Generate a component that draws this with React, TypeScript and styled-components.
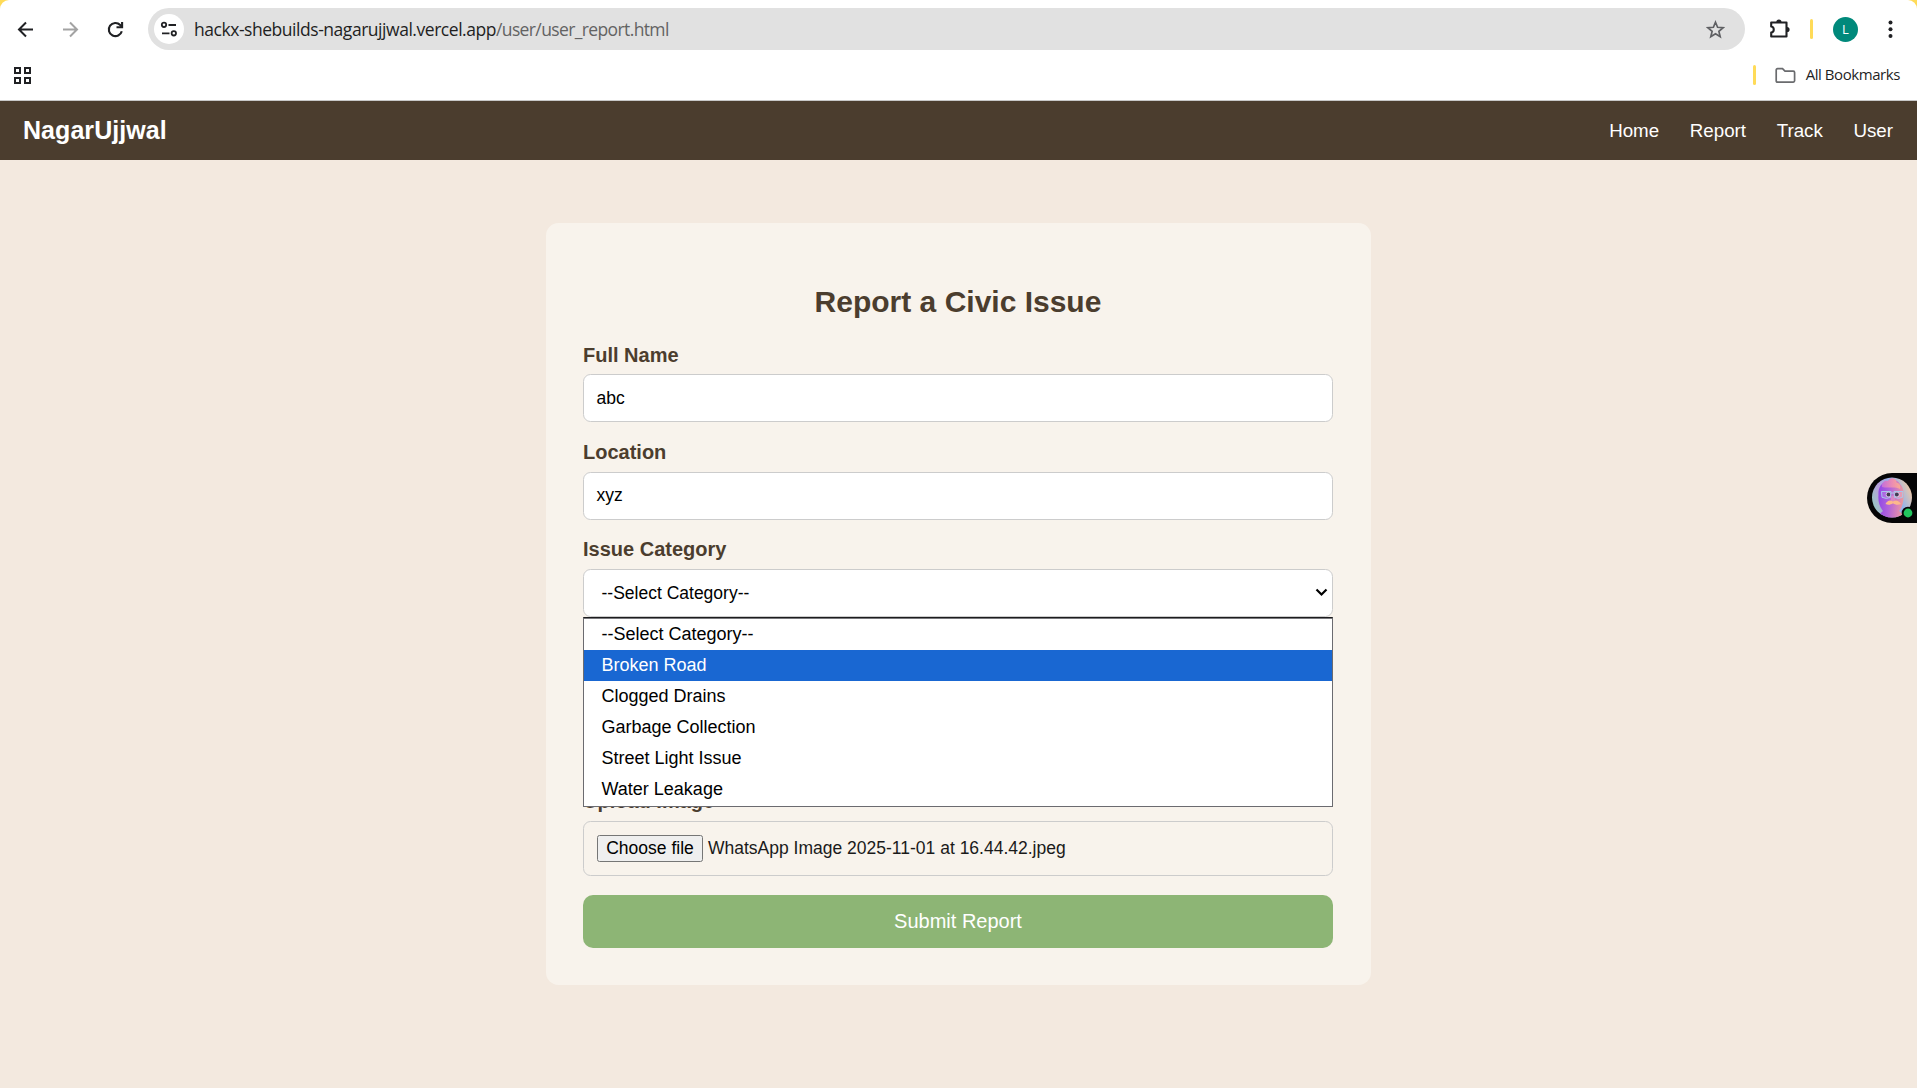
import React from "react";
import styled, { createGlobalStyle } from "styled-components";

const arial = `"Liberation Sans", Arial, sans-serif`;
const segoe = `"Open Sans", "Noto Sans", sans-serif`;

const GlobalStyle = createGlobalStyle`
  *, *::before, *::after { box-sizing: border-box; }
  body { margin: 0; background: #f3e9df; font-family: ${arial}; }
`;

const Screen = styled.div`
  position: relative;
  display: flex;
  flex-direction: column;
  width: 1917px;
  height: 1088px;
  overflow: hidden;
  background: #f3e9df;
`;

/* ---------- browser chrome ---------- */

const ChromeFrame = styled.header`
  flex: none;
  background: #ffdb58;
`;

const ChromeSurface = styled.div`
  height: 101px;
  background: #fff;
  border-bottom: 1px solid #c8c8c8;
  border-radius: 9px 9px 0 0;
`;

const ToolbarRow = styled.div`
  display: flex;
  align-items: center;
  height: 54px;
  padding: 4px 17px 0 14px;
`;

const BookmarksRow = styled.div`
  display: flex;
  align-items: center;
  justify-content: space-between;
  height: 46px;
  padding: 0 17px 4px 13px;
`;

const NavIcons = styled.div`
  display: flex;
  align-items: center;
  gap: 22px;
  margin-right: 21px;
`;

const Icon = styled.svg`
  display: block;
  flex: none;
`;

const AddressBar = styled.div`
  display: flex;
  align-items: center;
  width: 1597px;
  height: 42px;
  padding: 0 20px 0 6px;
  border-radius: 21px;
  background: #e1e1e1;
`;

const SiteInfo = styled.div`
  display: grid;
  place-items: center;
  width: 30px;
  height: 30px;
  border-radius: 50%;
  background: #fff;
`;

const Url = styled.div`
  flex: 1;
  margin-left: 10px;
  font: 400 17.5px/24px ${segoe};
  letter-spacing: -0.46px;
  color: #1f1f1f;
  white-space: nowrap;
`;

const UrlPath = styled.span`
  letter-spacing: -0.62px;
  color: #636363;
`;

const ToolbarActions = styled.div`
  display: flex;
  align-items: center;
  margin-left: 24px;
`;

const Divider = styled.span<{ $left: number; $right: number }>`
  width: 3px;
  height: 20px;
  margin: 0 ${(p) => p.$right}px 0 ${(p) => p.$left}px;
  border-radius: 2px;
  background: #ffdb58;
`;

const Profile = styled.span`
  display: grid;
  place-items: center;
  width: 25px;
  height: 25px;
  margin-right: 29px;
  border-radius: 50%;
  background: #00897b;
  color: #fff;
  font: 400 13px/25px ${segoe};
`;

const AllBookmarks = styled.div`
  display: flex;
  align-items: center;
  font: 400 15px/20px ${segoe};
  letter-spacing: -0.43px;
  color: #1f1f1f;
  white-space: nowrap;
`;

const BookmarksLabel = styled.span`
  margin-left: 10px;
  padding-bottom: 2px;
`;

/* ---------- site ---------- */

const SiteHeader = styled.nav`
  display: flex;
  align-items: center;
  justify-content: space-between;
  flex: none;
  height: 59px;
  padding: 0 24px 0 23px;
  background: #4b3d2e;
  color: #fff;
`;

const Brand = styled.div`
  font: 700 25px/29px ${arial};
  letter-spacing: 0.06px;
`;

const SiteLinks = styled.div`
  display: flex;
  gap: 30.6px;
`;

const SiteLink = styled.a`
  font: 400 18.75px/22px ${arial};
  color: #fff;
`;

const Main = styled.main`
  display: flex;
  justify-content: center;
  padding-top: 63px;
`;

const Card = styled.form`
  width: 825px;
  height: 762px;
  padding: 62px 38px 37px 37px;
  border-radius: 12.5px;
  background: #f8f3ec;
`;

const Title = styled.h2`
  margin: 0 0 24.65px;
  font: 700 30px/33px ${arial};
  color: #4b3d2e;
  text-align: center;
`;

const Field = styled.div`
  position: relative;
  margin-bottom: 17.55px;
`;

const Label = styled.label`
  display: block;
  margin-bottom: 7.7px;
  font: 700 20px/24px ${arial};
  color: #4b3d2e;
`;

const Control = styled.div<{ $inset?: number }>`
  display: flex;
  align-items: center;
  justify-content: space-between;
  height: 48px;
  padding: 0 4px 0.3px ${(p) => p.$inset ?? 12.5}px;
  border: 1px solid #ccc;
  border-radius: 7.5px;
  background: #fff;
  font: 400 17.5px/20px ${arial};
  color: #000;
`;

const TextArea = styled.textarea`
  display: block;
  width: 100%;
  height: 137.6px;
  border: 1px solid #ccc;
  border-radius: 7.5px;
  resize: none;
`;

const Menu = styled.ul`
  position: absolute;
  z-index: 2;
  top: 100%;
  left: 0;
  right: 0;
  height: 190px;
  margin: 0;
  padding: 1px 0 0;
  list-style: none;
  background: #fff;
  border: 1px solid #6b6b70;
  border-top-color: #1c1c1e;
  box-shadow: inset 0 1px 0 #77777b;
`;

const Option = styled.li<{ $active?: boolean }>`
  height: 31px;
  padding-left: 17.5px;
  font: 400 18px/31px ${arial};
  color: ${(p) => (p.$active ? "#fff" : "#000")};
  background: ${(p) => (p.$active ? "#1967d2" : "transparent")};
`;

const FileControl = styled.div`
  display: flex;
  align-items: center;
  height: 55px;
  padding: 0 0 1px 13px;
  border: 1px solid #ccc;
  border-radius: 7.5px;
  font: 400 17.5px/20px ${arial};
  color: #1a1a1a;
`;

const FileButton = styled.span`
  width: 106px;
  height: 27px;
  margin-right: 5px;
  border: 1px solid #767676;
  border-radius: 2.5px;
  background: #efefef;
  line-height: 25px;
  text-align: center;
  color: #000;
`;

const Submit = styled.button`
  display: block;
  width: 100%;
  height: 53px;
  margin-top: 18.75px;
  padding: 0;
  border: 0;
  border-radius: 10px;
  background: #8db575;
  color: #fff;
  font: 400 20px/23px ${arial};
`;

const Assistant = styled.div`
  position: absolute;
  top: 473px;
  right: 0;
  display: flex;
  align-items: center;
  width: 50px;
  height: 50px;
  padding-left: 5px;
  border-radius: 25px 0 0 25px;
  background: #050506;
`;

const OPTIONS = [
  "--Select Category--",
  "Broken Road",
  "Clogged Drains",
  "Garbage Collection",
  "Street Light Issue",
  "Water Leakage",
];

function AssistantFace() {
  return (
    <Icon width="45" height="50" viewBox="0 0 45 50">
      <defs>
        <linearGradient id="sky" x1="0" y1="0.75" x2="1" y2="0.3">
          <stop offset="0" stopColor="#8fd0bd" />
          <stop offset="0.3" stopColor="#b9a0dd" />
          <stop offset="0.6" stopColor="#94b4ea" />
          <stop offset="0.9" stopColor="#f3c9a4" />
        </linearGradient>
        <linearGradient id="skin" x1="0" y1="0.5" x2="1" y2="0.6">
          <stop offset="0" stopColor="#8f45e6" />
          <stop offset="0.4" stopColor="#b063dc" />
          <stop offset="0.75" stopColor="#dd86b4" />
          <stop offset="1" stopColor="#f6ac86" />
        </linearGradient>
        <linearGradient id="hair" x1="0" y1="0" x2="1" y2="0">
          <stop offset="0" stopColor="#c56fd8" />
          <stop offset="0.6" stopColor="#ee8fb0" />
          <stop offset="1" stopColor="#f8ab92" />
        </linearGradient>
        <clipPath id="disc">
          <circle cx="20" cy="24.5" r="20" />
        </clipPath>
      </defs>
      <g clipPath="url(#disc)">
        <rect width="45" height="50" fill="url(#sky)" />
        <path d="M5 47c1-5 4-7 6-9-4-5-5-10-4.500-16C6 15 9 10 14 9c4-3 12-3 14 2 3 3 4 7 3.500 12 0 7-1.500 12-4.500 15 2 2 6 4 7 9z" fill="url(#skin)" />
        <path d="M10 14c-1-4 3-7 6-6 3-5 9-2 8.500 1.500 3.500 1 4.500 4 3.500 6.500-5-3-12-.5-18-2z" fill="url(#hair)" />
        <ellipse cx="21" cy="25.500" rx="2.200" ry="3" fill="#d987c4" />
        <path d="M13.500 31c1.500-3.500 5-4.500 7.500-2.500 2.500-2 6-1 8 2.500-3 1-5.500 1-8-.8-2.500 1.800-5 1.800-7.500.8z" fill="#fdb98c" />
        <circle cx="16.300" cy="21.500" r="2.500" fill="#ded0ee" />
        <circle cx="25" cy="21.500" r="2.500" fill="#ded0ee" />
        <circle cx="16.500" cy="21.500" r="2" fill="#29203c" />
        <circle cx="24.800" cy="21.500" r="2" fill="#29203c" />
        <path
          d="M9.500 18.500h9.500l-.4 5.800q-4.300 2.200-8.600 0zM22 18.500h9l-.5 5.800q-4 2.200-8 0zM19 20h3"
          fill="#fff"
          fillOpacity="0.120"
          stroke="#a9c6ea"
          strokeWidth="1"
        />
      </g>
      <circle cx="36" cy="40" r="6.300" fill="#050506" />
      <circle cx="36" cy="40" r="4.400" fill="#22c55e" />
    </Icon>
  );
}

function BrowserChrome() {
  return (
    <ChromeFrame>
      <ChromeSurface>
        <ToolbarRow>
          <NavIcons>
            <Icon width="23" height="23" viewBox="0 0 23 23" fill="none" stroke="#202124" strokeWidth="2">
              <path d="M19 11.500H5.500M12 4.500l-7 7 7 7" />
            </Icon>
            <Icon width="23" height="23" viewBox="0 0 23 23" fill="none" stroke="#a3a3a3" strokeWidth="2">
              <path d="M4 11.500h13.500M11 4.500l7 7-7 7" />
            </Icon>
            <Icon width="23" height="23" viewBox="0 0 23 23" fill="none" stroke="#202124" strokeWidth="2.100">
              <path d="M17.800 13.200A6.600 6.600 0 1 1 16.200 7L18 9" />
              <path d="M18.100 4v5.300H12.500" />
            </Icon>
          </NavIcons>
          <AddressBar>
            <SiteInfo>
              <Icon width="18" height="18" viewBox="0 0 18 18" fill="none" stroke="#202124" strokeWidth="1.800">
                <circle cx="4" cy="4.800" r="2.200" />
                <path d="M8.500 5H16M2 13.300H9.500" />
                <circle cx="13.800" cy="13.300" r="2.200" />
              </Icon>
            </SiteInfo>
            <Url>
              hackx-shebuilds-nagarujjwal.vercel.app<UrlPath>/user/user_report.html</UrlPath>
            </Url>
            <Icon width="19" height="19" viewBox="0 0 19 19" fill="none" stroke="#5f6063" strokeWidth="1.700">
              <path d="M9.500 2.200l2.100 5.100 5.500.45-4.200 3.600 1.300 5.400-4.700-2.900-4.700 2.900 1.300-5.400L1.900 7.750l5.500-.45z" />
            </Icon>
          </AddressBar>
          <ToolbarActions>
            <Icon width="22" height="22" viewBox="0 0 22 22">
              <path
                d="M3.200 4.500H17.500V18.500H2.200V14.600C5.600 14.200 5.600 8.900 2.200 8.500V4.500z"
                fill="none"
                stroke="#202124"
                strokeWidth="2.100"
                strokeLinejoin="round"
              />
              <path d="M7.300 4a2.600 2.600 0 0 1 5.200 0zM18 8.900a2.600 2.600 0 0 1 0 5.200z" fill="#202124" />
            </Icon>
            <Divider $left={19} $right={20} />
            <Profile>L</Profile>
            <Icon width="7" height="19" viewBox="0 0 7 19" fill="#202124">
              <circle cx="3.500" cy="2.500" r="2" />
              <circle cx="3.500" cy="9.200" r="2" />
              <circle cx="3.500" cy="16" r="2" />
            </Icon>
          </ToolbarActions>
        </ToolbarRow>
        <BookmarksRow>
          <Icon width="19" height="19" viewBox="0 0 19 19" fill="none" stroke="#202124" strokeWidth="2">
            <path d="M2 2h5v5H2zM12 2h5v5h-5zM2 12h5v5H2zM12 12h5v5h-5z" />
          </Icon>
          <AllBookmarks>
            <Divider $left={0} $right={19} />
            <Icon width="21" height="17" viewBox="0 0 21 17" fill="none" stroke="#6a6b6e" strokeWidth="1.700">
              <path d="M1.200 3q0-1.300 1.300-1.300h5l2.500 2.500h8.300q1.300 0 1.300 1.300v8.300q0 1.300-1.300 1.300H2.500q-1.300 0-1.300-1.300z" />
            </Icon>
            <BookmarksLabel>All Bookmarks</BookmarksLabel>
          </AllBookmarks>
        </BookmarksRow>
      </ChromeSurface>
    </ChromeFrame>
  );
}

export default function App() {
  return (
    <Screen>
      <GlobalStyle />
      <BrowserChrome />
      <SiteHeader>
        <Brand>NagarUjjwal</Brand>
        <SiteLinks>
          {["Home", "Report", "Track", "User"].map((link) => (
            <SiteLink key={link}>{link}</SiteLink>
          ))}
        </SiteLinks>
      </SiteHeader>
      <Main>
        <Card>
          <Title>Report a Civic Issue</Title>
          <Field>
            <Label>Full Name</Label>
            <Control>abc</Control>
          </Field>
          <Field>
            <Label>Location</Label>
            <Control>xyz</Control>
          </Field>
          <Field>
            <Label>Issue Category</Label>
            <Control $inset={17.5}>
              --Select Category--
              <Icon width="13" height="9" viewBox="0 0 13 9" fill="none" stroke="#000" strokeWidth="2.200">
                <path d="M1.500 1.500l5 5 5-5" />
              </Icon>
            </Control>
            <Menu>
              {OPTIONS.map((option) => (
                <Option key={option} $active={option === "Broken Road"}>
                  {option}
                </Option>
              ))}
            </Menu>
          </Field>
          <Field>
            <TextArea readOnly />
          </Field>
          <div>
            <Label>Upload Image</Label>
            <FileControl>
              <FileButton>Choose file</FileButton>
              WhatsApp Image 2025-11-01 at 16.44.42.jpeg
            </FileControl>
          </div>
          <Submit type="button">Submit Report</Submit>
        </Card>
      </Main>
      <Assistant>
        <AssistantFace />
      </Assistant>
    </Screen>
  );
}
